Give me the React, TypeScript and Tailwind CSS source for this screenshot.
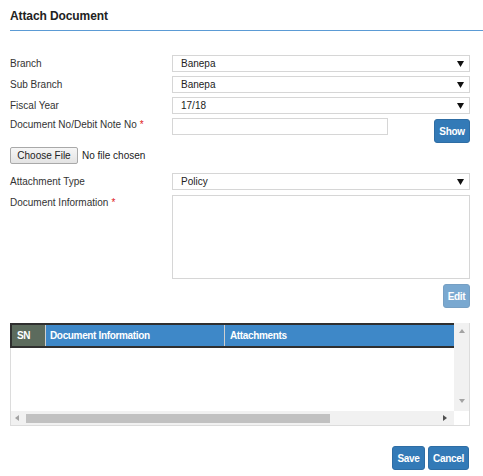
const Caret = () => (
  <svg width="7" height="6" viewBox="0 0 7 6">
    <path d="M0 0h7L3.5 6z" fill="#111" />
  </svg>
);

const SelectBox = ({ value }: { value: string }) => (
  <div className="h-[17px] w-full flex items-center justify-between pl-[8px] pr-[5px] border border-[#d6d6d6] bg-white text-[10px] text-[#222]">
    <span>{value}</span>
    <Caret />
  </div>
);

const Label = ({ text, required }: { text: string; required?: boolean }) => (
  <div className="w-[162px] shrink-0 text-[10px] leading-[14px] text-[#333]">
    {text}
    {required && <span className="text-[#e0201b] ml-[3px]">*</span>}
  </div>
);

const BlueButton = ({ label, className = "" }: { label: string; className?: string }) => (
  <button
    className={`h-[24px] rounded-[3px] bg-[#337ab7] border border-[#2e6da4] text-white text-[10px] font-bold tracking-[-0.3px] flex items-center justify-center ${className}`}
  >
    {label}
  </button>
);

const ScrollArrow = ({ dir }: { dir: "up" | "down" | "left" | "right" }) => {
  const paths = {
    up: "M0 4L3 0l3 4z",
    down: "M0 0h6L3 4z",
    left: "M4 0v6L0 3z",
    right: "M0 0v6l4-3z",
  };
  const dark = dir === "left" || dir === "right";
  return (
    <svg width="6" height="6" viewBox="0 0 6 6">
      <path d={paths[dir]} fill={dir === "right" ? "#505050" : dark ? "#a3a3a3" : "#a3a3a3"} />
    </svg>
  );
};

export default function App() {
  return (
    <div className="w-[483px] h-[476px] bg-white font-['Liberation_Sans',Arial,sans-serif] text-[#333]">
      <div className="ml-[10px] h-[31px] border-b border-[#5b9bd5] pt-[9px]">
        <h1 className="text-[12px] leading-[14px] font-bold text-[#222] tracking-[-0.1px]">Attach Document</h1>
      </div>

      <div className="pl-[10px] w-[470px] mt-[24px] flex flex-col">
        <div className="flex items-center h-[17px]">
          <Label text="Branch" />
          <SelectBox value="Banepa" />
        </div>
        <div className="flex items-center h-[17px] mt-[4px]">
          <Label text="Sub Branch" />
          <SelectBox value="Banepa" />
        </div>
        <div className="flex items-center h-[17px] mt-[4px]">
          <Label text="Fiscal Year" />
          <SelectBox value="17/18" />
        </div>
        <div className="flex items-start mt-[4px]">
          <Label text="Document No/Debit Note No" required />
          <div className="flex-1 flex items-start">
            <div className="w-[216px] h-[17px] border border-[#d6d6d6] bg-white" />
            <BlueButton label="Show" className="ml-auto w-[36px] mt-[1px]" />
          </div>
        </div>

        <div className="flex items-center mt-[4px]">
          <button className="h-[17px] w-[68px] rounded-[2px] border border-[#a9a9a9] bg-[linear-gradient(#f6f6f6,#e3e3e3)] text-[10px] text-[#222] flex items-center justify-center">
            Choose File
          </button>
          <span className="ml-[4px] text-[10px] text-[#222]">No file chosen</span>
        </div>

        <div className="flex items-center h-[17px] mt-[9px]">
          <Label text="Attachment Type" />
          <SelectBox value="Policy" />
        </div>
        <div className="flex items-start mt-[5px]">
          <div className="pt-[1px]">
            <Label text="Document Information" required />
          </div>
          <div className="flex-1 h-[84px] border border-[#d6d6d6] bg-white" />
        </div>
        <div className="flex justify-end mt-[5px]">
          <BlueButton label="Edit" className="w-[27px] opacity-65" />
        </div>

        <div className="mt-[15px] w-[460px] border-r border-b border-[#dcdcdc] flex flex-col">
          <div className="flex h-[88px]">
            <div className="flex-1 flex flex-col">
              <div className="flex h-[25px] border-t-2 border-b-2 border-l-2 border-[#2f2f2f] text-white text-[10px] font-bold tracking-[-0.35px]">
                <div className="w-[34px] bg-[#5c6b5d] border-r border-[#cfcfcf] flex items-center pl-[5px]">SN</div>
                <div className="w-[179px] bg-[#3e88c8] border-r border-[#cfcfcf] flex items-center pl-[4px]">Document Information</div>
                <div className="flex-1 bg-[#3e88c8] flex items-center pl-[5px]">Attachments</div>
              </div>
              <div className="flex-1 bg-white border-l border-[#dcdcdc]" />
            </div>
            <div className="w-[15px] bg-[#f1f1f1] flex flex-col items-center justify-between py-[6px]">
              <ScrollArrow dir="up" />
              <ScrollArrow dir="down" />
            </div>
          </div>
          <div className="flex h-[14px]">
            <div className="flex-1 bg-[#f1f1f1] border-l border-[#dcdcdc] flex items-center pl-[4px] pr-[5px]">
              <ScrollArrow dir="left" />
              <div className="ml-[5px] w-[304px] h-[9px] bg-[#c1c1c1]" />
              <div className="ml-auto">
                <ScrollArrow dir="right" />
              </div>
            </div>
            <div className="w-[15px] bg-white" />
          </div>
        </div>

        <div className="flex justify-end gap-[3px] mt-[20px] pr-[1px]">
          <BlueButton label="Save" className="w-[33px]" />
          <BlueButton label="Cancel" className="w-[41px]" />
        </div>
      </div>
    </div>
  );
}
